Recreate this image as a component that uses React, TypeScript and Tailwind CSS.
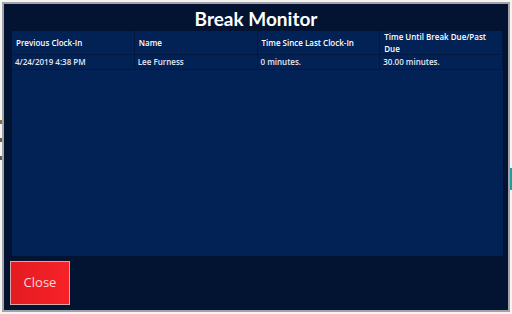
import React from "react";

const cols = ["Previous Clock-In", "Name", "Time Since Last Clock-In", "Time Until Break Due/Past Due"];
const row = ["4/24/2019 4:38 PM", "Lee Furness", "0 minutes.", "30.00 minutes."];

export default function App() {
  return (
    <div className="relative w-[512px] h-[314px] overflow-hidden bg-[#f4f4f4] p-[2px] flex" style={{ fontFamily: '"Open Sans", "Noto Sans", sans-serif' }}>
      {/* fragments of the page behind the dialog */}
      <div className="absolute left-0 top-[120px] flex flex-col gap-[14px]">
        <div className="w-[3px] h-[4px] bg-[#8a6a40]" />
        <div className="w-[3px] h-[4px] bg-[#6a5a40]" />
        <div className="w-[3px] h-[4px] bg-[#5a5a5a]" />
      </div>
      <div className="absolute right-0 top-[168px] w-[4px] h-[22px] bg-[#1aa0a0]" />

      <div className="relative flex-1 border-2 border-[#a3a3a6] bg-[#021432] flex flex-col">
        <div
          className="h-[26px] flex items-center justify-center text-white font-bold text-[19px] leading-none pt-[2px]"
          style={{ fontFamily: 'Lato, "Open Sans", sans-serif' }}
        >
          Break Monitor
        </div>
        <div className="ml-[7px] mr-[4px] h-[227px] bg-[#022256] border border-[#011233]">
          <div className="grid grid-cols-4 text-white font-semibold text-[8px] leading-[12px]">
            {cols.map((c, i) => (
              <div key={i} className="h-[24px] flex items-center pl-[4px] pr-[8px] border-r border-b border-[#03183f]">
                {c}
              </div>
            ))}
            {row.map((c, i) => (
              <div key={i} className="h-[15px] flex items-center px-[3px] border-r border-b border-[#03183f] text-[#e6e8f0]">
                {c}
              </div>
            ))}
          </div>
        </div>
        <div className="ml-[6px] mt-[4px] w-[60px] h-[44px] border border-[#d6a9a9] bg-gradient-to-r from-[#e41b22] to-[#f72228] flex items-center justify-center text-[#ffd9d9] text-[13px]">
          Close
        </div>
      </div>
    </div>
  );
}
